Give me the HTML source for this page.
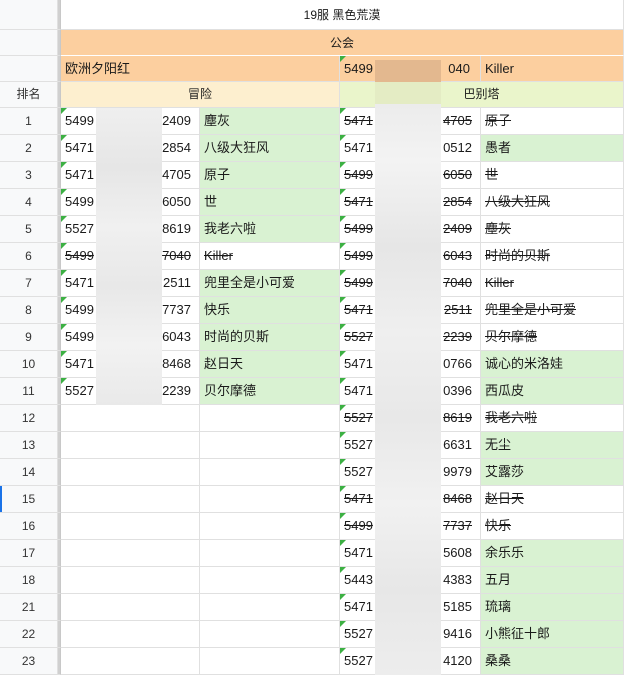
<!DOCTYPE html>
<html><head><meta charset="utf-8"><style>
*{box-sizing:border-box;margin:0;padding:0}
body{width:624px;height:677px;overflow:hidden;background:#fff;font-family:"Liberation Sans","Noto Sans CJK SC",sans-serif;font-size:13px;color:#1a1a1a;position:relative}
.r{display:flex;height:27px}
.r>div{border-right:1px solid #e0e0e0;border-bottom:1px solid #e0e0e0;height:100%;line-height:26px;white-space:nowrap;position:relative;overflow:hidden}
.h{width:58px;background:#f8f9fa;text-align:center;color:#333;font-size:12px}
.sep{width:3px;background:#d0d0d0;border-right:1px solid #c8c8c8 !important}
.a{width:139px}.b{width:140px}.c{width:141px}.d{width:143px}
.id{padding-left:4px}
.id .s{position:absolute;right:8px;top:0}
.nm{padding-left:4px}
.g{background:#d9f2d2}
.t::before{content:"";position:absolute;left:0;top:0;border-top:6px solid #3cb043;border-right:6px solid transparent}
.st,.st .s{text-decoration:line-through}
.blur{position:absolute;background:#ebebeb}
</style></head><body>
<div class="r" style="height:30px"><div class="h" style="line-height:30px"></div><div class="sep"></div><div style="width:563px;text-align:center;line-height:30px;font-size:12px">19服 黑色荒漠</div></div>
<div class="r" style="height:26px"><div class="h"></div><div class="sep"></div><div style="width:563px;background:#fccf9f;text-align:center;line-height:27px;font-size:12px;border-bottom-color:#fff">公会</div></div>
<div class="r" style="height:26px"><div class="h"></div><div class="sep"></div><div style="width:279px;background:#fccf9f;padding-left:4px;line-height:25px">欧洲夕阳红</div><div class="c t" style="background:#fccf9f;padding-left:4px;line-height:25px">5499<span style="position:absolute;right:10px">040</span></div><div class="d" style="background:#fccf9f;padding-left:4px;line-height:25px">Killer</div></div>
<div class="r" style="height:26px"><div class="h" style="line-height:25px">排名</div><div class="sep"></div><div style="width:279px;background:#fdefcf;text-align:center;line-height:25px;font-size:12px">冒险</div><div style="width:284px;background:#eaf5cb;text-align:center;line-height:25px;font-size:12px">巴别塔</div></div>

<div class="r"><div class="h">1</div><div class="sep"></div><div class="a id t">5499<span class="s">2409</span></div><div class="b nm g">塵灰</div><div class="c id t st">5471<span class="s">4705</span></div><div class="d nm st">原子</div></div>
<div class="r"><div class="h">2</div><div class="sep"></div><div class="a id t">5471<span class="s">2854</span></div><div class="b nm g">八级大狂风</div><div class="c id t">5471<span class="s">0512</span></div><div class="d nm g">愚者</div></div>
<div class="r"><div class="h">3</div><div class="sep"></div><div class="a id t">5471<span class="s">4705</span></div><div class="b nm g">原子</div><div class="c id t st">5499<span class="s">6050</span></div><div class="d nm st">世</div></div>
<div class="r"><div class="h">4</div><div class="sep"></div><div class="a id t">5499<span class="s">6050</span></div><div class="b nm g">世</div><div class="c id t st">5471<span class="s">2854</span></div><div class="d nm st">八级大狂风</div></div>
<div class="r"><div class="h">5</div><div class="sep"></div><div class="a id t">5527<span class="s">8619</span></div><div class="b nm g">我老六啦</div><div class="c id t st">5499<span class="s">2409</span></div><div class="d nm st">塵灰</div></div>
<div class="r"><div class="h">6</div><div class="sep"></div><div class="a id t st">5499<span class="s">7040</span></div><div class="b nm st">Killer</div><div class="c id t st">5499<span class="s">6043</span></div><div class="d nm st">时尚的贝斯</div></div>
<div class="r"><div class="h">7</div><div class="sep"></div><div class="a id t">5471<span class="s">2511</span></div><div class="b nm g">兜里全是小可爱</div><div class="c id t st">5499<span class="s">7040</span></div><div class="d nm st">Killer</div></div>
<div class="r"><div class="h">8</div><div class="sep"></div><div class="a id t">5499<span class="s">7737</span></div><div class="b nm g">快乐</div><div class="c id t st">5471<span class="s">2511</span></div><div class="d nm st">兜里全是小可爱</div></div>
<div class="r"><div class="h">9</div><div class="sep"></div><div class="a id t">5499<span class="s">6043</span></div><div class="b nm g">时尚的贝斯</div><div class="c id t st">5527<span class="s">2239</span></div><div class="d nm st">贝尔摩德</div></div>
<div class="r"><div class="h">10</div><div class="sep"></div><div class="a id t">5471<span class="s">8468</span></div><div class="b nm g">赵日天</div><div class="c id t">5471<span class="s">0766</span></div><div class="d nm g">诚心的米洛娃</div></div>
<div class="r"><div class="h">11</div><div class="sep"></div><div class="a id t">5527<span class="s">2239</span></div><div class="b nm g">贝尔摩德</div><div class="c id t">5471<span class="s">0396</span></div><div class="d nm g">西瓜皮</div></div>
<div class="r"><div class="h">12</div><div class="sep"></div><div class="a"></div><div class="b"></div><div class="c id t st">5527<span class="s">8619</span></div><div class="d nm st">我老六啦</div></div>
<div class="r"><div class="h">13</div><div class="sep"></div><div class="a"></div><div class="b"></div><div class="c id t">5527<span class="s">6631</span></div><div class="d nm g">无尘</div></div>
<div class="r"><div class="h">14</div><div class="sep"></div><div class="a"></div><div class="b"></div><div class="c id t">5527<span class="s">9979</span></div><div class="d nm g">艾露莎</div></div>
<div class="r"><div class="h" style="box-shadow:inset 2px 0 0 #1a73e8">15</div><div class="sep"></div><div class="a"></div><div class="b"></div><div class="c id t st">5471<span class="s">8468</span></div><div class="d nm st">赵日天</div></div>
<div class="r"><div class="h">16</div><div class="sep"></div><div class="a"></div><div class="b"></div><div class="c id t st">5499<span class="s">7737</span></div><div class="d nm st">快乐</div></div>
<div class="r"><div class="h">17</div><div class="sep"></div><div class="a"></div><div class="b"></div><div class="c id t">5471<span class="s">5608</span></div><div class="d nm g">余乐乐</div></div>
<div class="r"><div class="h">18</div><div class="sep"></div><div class="a"></div><div class="b"></div><div class="c id t">5443<span class="s">4383</span></div><div class="d nm g">五月</div></div>
<div class="r"><div class="h">21</div><div class="sep"></div><div class="a"></div><div class="b"></div><div class="c id t">5471<span class="s">5185</span></div><div class="d nm g">琉璃</div></div>
<div class="r"><div class="h">22</div><div class="sep"></div><div class="a"></div><div class="b"></div><div class="c id t">5527<span class="s">9416</span></div><div class="d nm g">小熊征十郎</div></div>
<div class="r"><div class="h">23</div><div class="sep"></div><div class="a"></div><div class="b"></div><div class="c id t">5527<span class="s">4120</span></div><div class="d nm g">桑桑</div></div>

<div class="blur" style="left:96px;top:108px;width:66px;height:297px;background:linear-gradient(180deg,#efefef,#e6e6e6 20%,#f0f0f0 40%,#e8e8e8 60%,#f2f2f2 80%,#e9e9e9)"></div>
<div class="blur" style="left:375px;top:60px;width:66px;height:22px;background:#e3b88f"></div>
<div class="blur" style="left:375px;top:82px;width:66px;height:22px;background:#e4ecc4"></div>
<div class="blur" style="left:375px;top:104px;width:66px;height:571px;background:linear-gradient(180deg,#ececec,#f3f3f3 10%,#e6e6e6 25%,#efefef 40%,#e8e8e8 55%,#f1f1f1 70%,#e7e7e7 85%,#ededed)"></div>
</body></html>
